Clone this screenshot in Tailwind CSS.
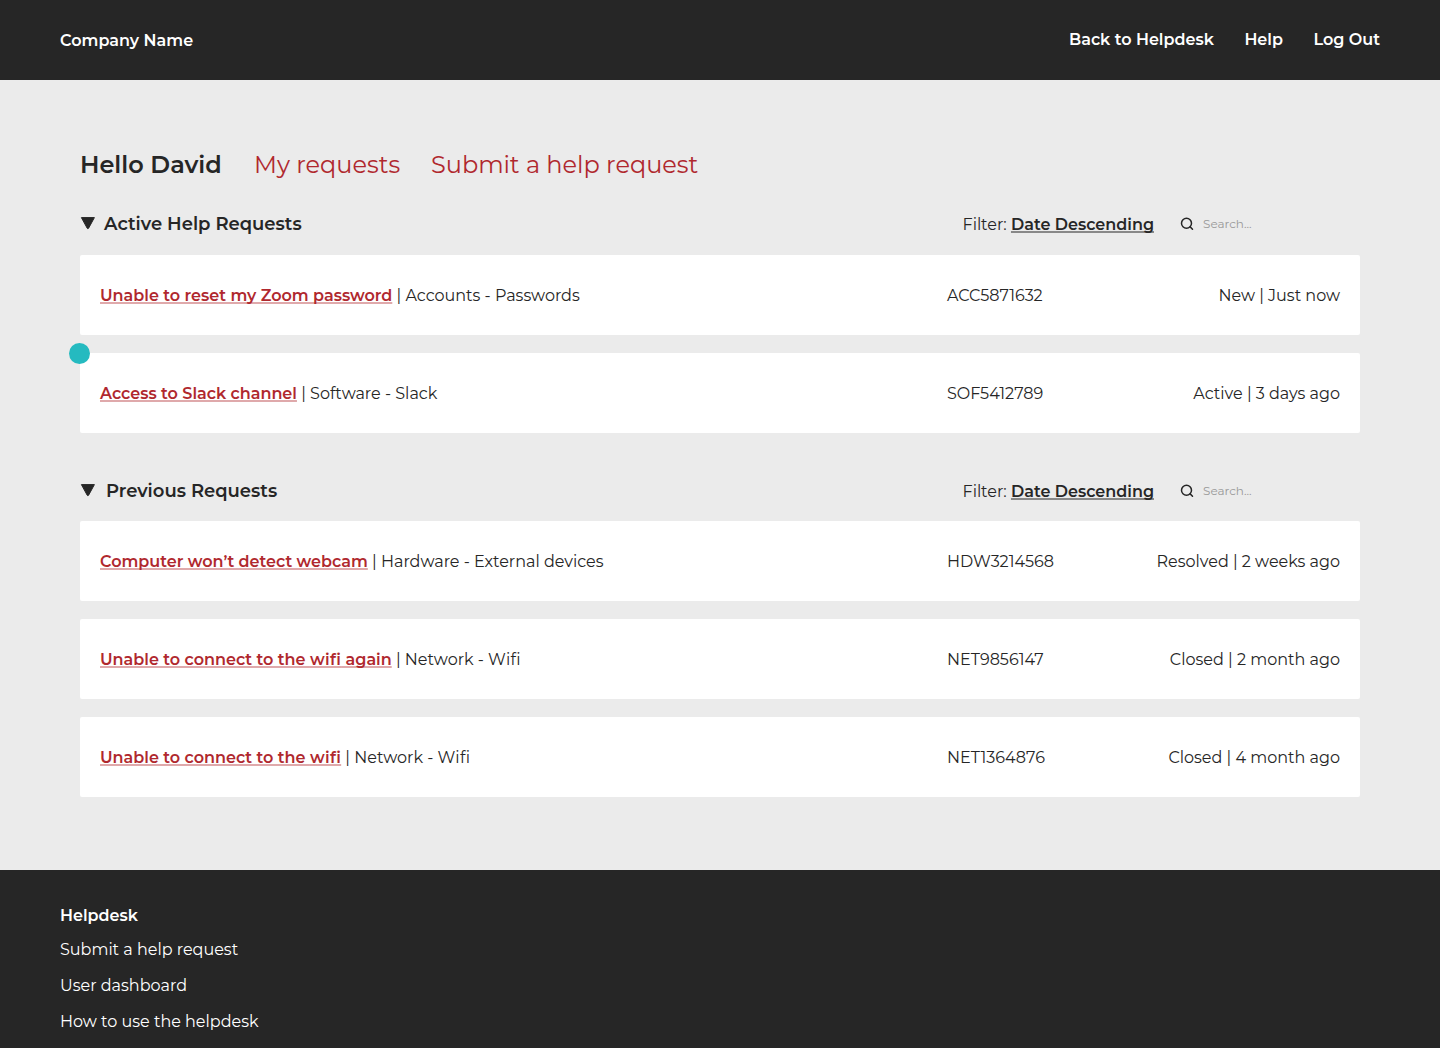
<!DOCTYPE html>
<html lang="en">
<head>
<meta charset="utf-8">
<title>Helpdesk</title>
<script src="https://cdn.jsdelivr.net/npm/@tailwindcss/browser@4"></script>
</head>
<body class="flex h-[1048px] flex-col overflow-hidden bg-[#ebebeb] font-['Montserrat','Inter',sans-serif] text-base leading-5 font-normal whitespace-nowrap text-[#262626]">
  <header class="flex h-20 shrink-0 items-center justify-between bg-[#262626] px-[60px] font-semibold text-white">
    <a class="mt-px tracking-[0.03px]">Company Name</a>
    <nav class="-mt-px flex gap-[30.6px]">
      <a>Back to Helpdesk</a>
      <a>Help</a>
      <a>Log Out</a>
    </nav>
  </header>

  <main class="h-[790px] shrink-0 px-20 pt-[69px]">
    <div class="flex h-8 items-center text-2xl">
      <h1 class="w-[174px] font-semibold">Hello David</h1>
      <a class="w-[177px] text-[#b0282e]">My requests</a>
      <a class="text-[#b0282e]">Submit a help request</a>
    </div>

    <section class="relative pt-[33px]">
      <div class="flex h-5 items-center">
        <svg class="mr-2 -mt-0.5 size-4" viewBox="0 0 16 16"><path d="M1.4 2.6h13L8.6 13.2q-.7 1-1.4 0z" fill="#262626" stroke="#262626" stroke-linejoin="round"/></svg>
        <h2 class="w-[858.5px] text-lg leading-5 font-semibold">Active Help Requests</h2>
        <p class="mt-0.5 w-[191.5px]">Filter: <a class="font-semibold underline decoration-[#262626]/50 decoration-2 underline-offset-[1px] [text-decoration-skip-ink:none]">Date Descending</a></p>
        <svg class="ml-[25px] size-4" viewBox="0 0 16 16" fill="none" stroke="#262626" stroke-width="1.5" stroke-linecap="round"><circle cx="7.5" cy="7.2" r="5"/><path d="m11.2 10.9 2.3 2.3"/></svg>
        <span class="ml-2 text-xs text-[#999]">Search...</span>
      </div>
      <div class="mt-[21px] flex flex-col gap-[18px]">
        <div class="grid h-20 grid-cols-[847px_1fr_auto] items-center rounded-[2px] bg-white px-5 pt-px">
          <p><a class="font-semibold text-[#b0282e] underline decoration-[#b0282e]/40 decoration-2 underline-offset-[1px] [text-decoration-skip-ink:none]">Unable to reset my Zoom password</a> | Accounts - Passwords</p>
          <span>ACC5871632</span>
          <span>New | Just now</span>
        </div>
        <div class="grid h-20 grid-cols-[847px_1fr_auto] items-center rounded-[2px] bg-white px-5 pt-px">
          <p><a class="font-semibold text-[#b0282e] underline decoration-[#b0282e]/40 decoration-2 underline-offset-[1px] [text-decoration-skip-ink:none]">Access to Slack channel</a> | Software - Slack</p>
          <span>SOF5412789</span>
          <span>Active | 3 days ago</span>
        </div>
      </div>
      <span class="absolute bottom-[69px] -left-[11px] size-[21px] rounded-full bg-[#25bac0]"></span>
    </section>

    <section class="pt-12">
      <div class="flex h-5 items-center">
        <svg class="mr-2.5 -mt-0.5 size-4" viewBox="0 0 16 16"><path d="M1.4 2.6h13L8.6 13.2q-.7 1-1.4 0z" fill="#262626" stroke="#262626" stroke-linejoin="round"/></svg>
        <h2 class="w-[856.5px] text-lg leading-5 font-semibold">Previous Requests</h2>
        <p class="mt-0.5 w-[191.5px]">Filter: <a class="font-semibold underline decoration-[#262626]/50 decoration-2 underline-offset-[1px] [text-decoration-skip-ink:none]">Date Descending</a></p>
        <svg class="ml-[25px] size-4" viewBox="0 0 16 16" fill="none" stroke="#262626" stroke-width="1.5" stroke-linecap="round"><circle cx="7.5" cy="7.2" r="5"/><path d="m11.2 10.9 2.3 2.3"/></svg>
        <span class="ml-2 text-xs text-[#999]">Search...</span>
      </div>
      <div class="mt-5 flex flex-col gap-[18px]">
        <div class="grid h-20 grid-cols-[847px_1fr_auto] items-center rounded-[2px] bg-white px-5 pt-px">
          <p><a class="font-semibold text-[#b0282e] underline decoration-[#b0282e]/40 decoration-2 underline-offset-[1px] [text-decoration-skip-ink:none]">Computer won’t detect webcam</a> | Hardware - External devices</p>
          <span>HDW3214568</span>
          <span>Resolved | 2 weeks ago</span>
        </div>
        <div class="grid h-20 grid-cols-[847px_1fr_auto] items-center rounded-[2px] bg-white px-5 pt-px">
          <p><a class="font-semibold text-[#b0282e] underline decoration-[#b0282e]/40 decoration-2 underline-offset-[1px] [text-decoration-skip-ink:none]">Unable to connect to the <span class="tracking-[0.35px]">wifi</span> again</a> | Network - <span class="tracking-[0.35px]">Wifi</span></p>
          <span>NET9856147</span>
          <span>Closed | 2 month ago</span>
        </div>
        <div class="grid h-20 grid-cols-[847px_1fr_auto] items-center rounded-[2px] bg-white px-5 pt-px">
          <p><a class="font-semibold text-[#b0282e] underline decoration-[#b0282e]/40 decoration-2 underline-offset-[1px] [text-decoration-skip-ink:none]">Unable to connect to the <span class="tracking-[0.35px]">wifi</span></a> | Network - <span class="tracking-[0.35px]">Wifi</span></p>
          <span>NET1364876</span>
          <span>Closed | 4 month ago</span>
        </div>
      </div>
    </section>
  </main>

  <footer class="flex flex-1 flex-col items-start gap-4 bg-[#262626] px-[60px] pt-9 text-white">
    <h3 class="-mb-0.5 font-semibold">Helpdesk</h3>
    <a>Submit a help request</a>
    <a>User dashboard</a>
    <a>How to use the helpdesk</a>
  </footer>
</body>
</html>
